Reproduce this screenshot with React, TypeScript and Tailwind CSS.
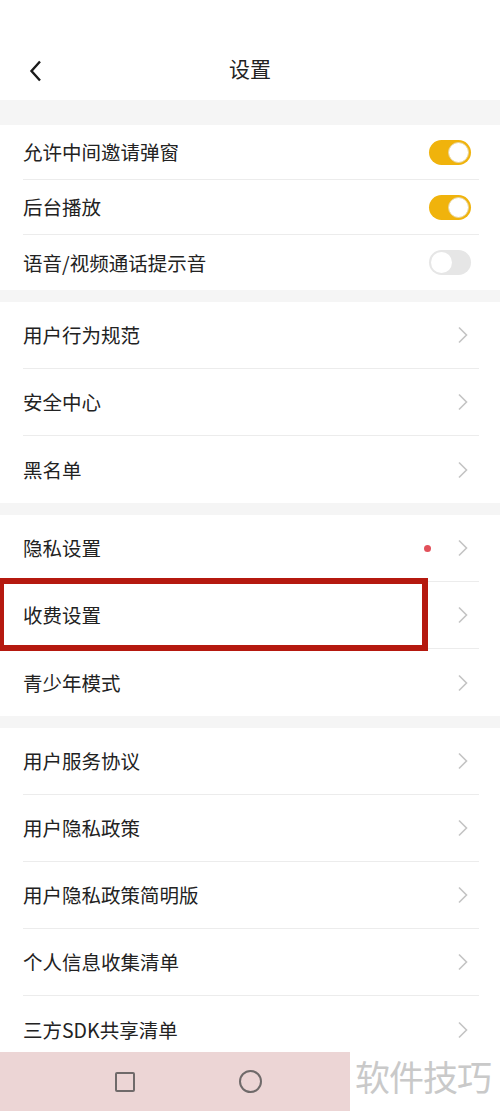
import React from "react";

const font = { fontFamily: '"Noto Sans CJK SC", "Noto Sans", sans-serif' };

function Chevron() {
  return (
    <svg width="12" height="18" viewBox="0 0 12 18" className="text-[#c4c4c4]">
      <path d="M2 1.5 L9.5 9 L2 16.5" fill="none" stroke="currentColor" strokeWidth="1.6" />
    </svg>
  );
}

function Toggle({ on }: { on: boolean }) {
  return on ? (
    <div className="w-[42px] h-[25px] rounded-full bg-[#f0b30c] flex items-center justify-end p-[2px]">
      <div className="w-[21px] h-[21px] rounded-full bg-white border border-[#e8d49a]" />
    </div>
  ) : (
    <div className="w-[42px] h-[25px] rounded-full bg-[#e6e6e6] flex items-center justify-start p-[2px]">
      <div className="w-[21px] h-[21px] rounded-full bg-white" />
    </div>
  );
}

function Section({ children }: { children: React.ReactNode }) {
  return (
    <div className="bg-white pl-[23px] pr-[21px]">
      <div className="divide-y divide-[#ececec]">{children}</div>
    </div>
  );
}

function LinkRow({ label, dot }: { label: string; dot?: boolean }) {
  return (
    <div className="h-[67px] flex items-center justify-between pr-[10px]">
      <span className="text-[19.5px] text-[#222]">{label}</span>
      <div className="flex items-center gap-[26px]">
        {dot && <div className="w-[7px] h-[7px] rounded-full bg-[#e2505a]" />}
        <Chevron />
      </div>
    </div>
  );
}

export default function App() {
  const s1: [string, boolean][] = [
    ["允许中间邀请弹窗", true],
    ["后台播放", true],
    ["语音/视频通话提示音", false],
  ];
  const s2 = ["用户行为规范", "安全中心", "黑名单"];
  const s4 = ["用户服务协议", "用户隐私政策", "用户隐私政策简明版", "个人信息收集清单", "三方SDK共享清单"];

  return (
    <div className="relative w-[500px] h-[1111px] overflow-hidden bg-[#f5f5f5]" style={font}>
      {/* header */}
      <div className="bg-white h-[100px] flex flex-col">
        <div className="h-[40px]" />
        <div className="flex-1 relative flex items-center justify-center">
          <svg width="14" height="22" viewBox="0 0 14 22" className="absolute left-[29px] top-[20px]">
            <path d="M11 1.5 L2.5 11 L11 20.5" fill="none" stroke="#1a1a1a" strokeWidth="2.4" />
          </svg>
          <span className="text-[21px] text-[#222] mt-[-2px]">设置</span>
        </div>
      </div>

      <div className="h-[25px]" />

      <Section>
        {s1.map(([l, on]) => (
          <div key={l} className="h-[55px] flex items-center justify-between pr-[8px]">
            <span className="text-[19.5px] text-[#222]">{l}</span>
            <Toggle on={on} />
          </div>
        ))}
      </Section>

      <div className="h-[12px]" />

      <Section>
        {s2.map((l) => (
          <LinkRow key={l} label={l} />
        ))}
      </Section>

      <div className="h-[12px]" />

      <Section>
        <LinkRow label="隐私设置" dot />
        <LinkRow label="收费设置" />
        <LinkRow label="青少年模式" />
      </Section>

      <div className="h-[12px]" />

      <Section>
        {s4.map((l) => (
          <LinkRow key={l} label={l} />
        ))}
      </Section>

      {/* highlight box */}
      <div className="absolute left-[-2px] top-[578px] w-[430px] h-[73px] border-[6px] border-[#b5190f]" />

      {/* bottom nav */}
      <div className="absolute left-0 bottom-0 w-[500px] h-[59px] flex bg-white">
        <div className="w-[350px] h-full bg-[#ecd5d5] flex items-center">
          <div className="ml-[115px] w-[20px] h-[20px] border-2 border-[#6f6a6a] rounded-[2px]" />
          <div className="ml-[104px] w-[23px] h-[23px] border-2 border-[#6f6a6a] rounded-full" />
        </div>
        <div className="flex-1 flex items-start pt-[4px] pl-[5px]">
          <span className="text-[35px] leading-[40px] text-[#c9c9c9] tracking-[-1px]">软件技巧</span>
        </div>
      </div>
    </div>
  );
}
